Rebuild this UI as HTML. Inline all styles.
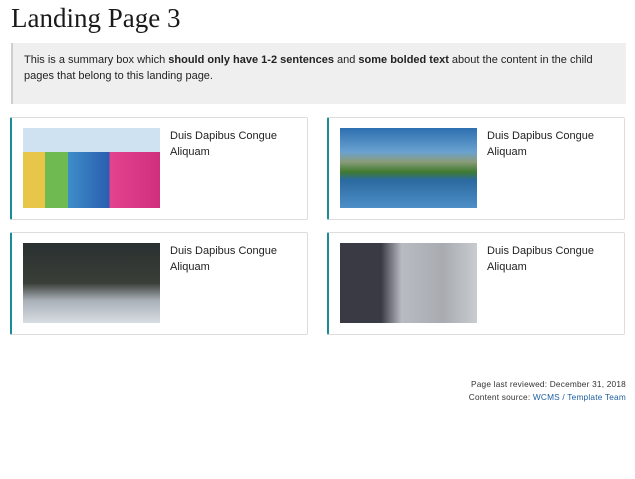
<!DOCTYPE html>
<html><head><style>
body{margin:0;background:#fff;font-family:"Liberation Sans",sans-serif;color:#222;width:635px;height:479px;overflow:hidden;position:relative}
h1{position:absolute;left:11px;top:3px;margin:0;font-family:"Liberation Serif",serif;font-weight:normal;font-size:27px;color:#1a1a1a}
.sum{position:absolute;left:11px;top:43px;width:580px;height:61px;background:#efefef;border-left:2px solid #cfcfcf;padding:0 22px 0 11px;font-size:11px;line-height:16px;color:#222}
.sum p{margin:9px 0 0}
.card{position:absolute;width:295px;height:101px;border:1px solid #ddd;border-left:2px solid #1b8b96;border-radius:2px;background:#fff}
.img{position:absolute;left:11px;top:10px;width:137px;height:80px}
.t{position:absolute;left:158px;top:10px;font-size:11px;line-height:16px;color:#222}
.f{position:absolute;right:9px;font-size:8.3px;letter-spacing:0.2px;color:#333;text-align:right}
.f a{color:#1f5fa0;text-decoration:none}
</style></head><body>
<h1>Landing Page 3</h1>
<div class="sum"><p>This is a summary box which <b>should only have 1-2 sentences</b> and <b>some bolded text</b> about the content in the child pages that belong to this landing page.</p></div>

<div class="card" style="left:10px;top:117px">
<div class="img" style="background:linear-gradient(180deg,#cfe2f2 0,#cfe2f2 30%,transparent 30%),linear-gradient(90deg,#e7c64a 0,#e7c64a 16%,#6fbb52 16%,#6fbb52 33%,#3d8ec8 33%,#2a5db0 63%,#e2448f 63%,#d02f7d 100%);"></div>
<div class="t">Duis Dapibus Congue<br>Aliquam</div></div>

<div class="card" style="left:327px;top:117px">
<div class="img" style="background:linear-gradient(180deg,#2d6fb0 0,#6aa2d0 30%,#8a9c7a 42%,#3f7a30 55%,#2a6aa0 65%,#4f8fc8 100%)"></div>
<div class="t">Duis Dapibus Congue<br>Aliquam</div></div>

<div class="card" style="left:10px;top:232px">
<div class="img" style="background:linear-gradient(180deg,#2a3030 0,#3a3e38 50%,#aab0b8 72%,#d8dde2 100%)"></div>
<div class="t">Duis Dapibus Congue<br>Aliquam</div></div>

<div class="card" style="left:327px;top:232px">
<div class="img" style="background:linear-gradient(90deg,#3a3a44 0,#3a3a44 30%,#b8bcc2 45%,#a8abb0 75%,#c8ccd0 100%)"></div>
<div class="t">Duis Dapibus Congue<br>Aliquam</div></div>

<div class="f" style="top:379px">Page last reviewed: December 31, 2018</div>
<div class="f" style="top:392px">Content source: <a>WCMS / Template Team</a></div>
</body></html>
